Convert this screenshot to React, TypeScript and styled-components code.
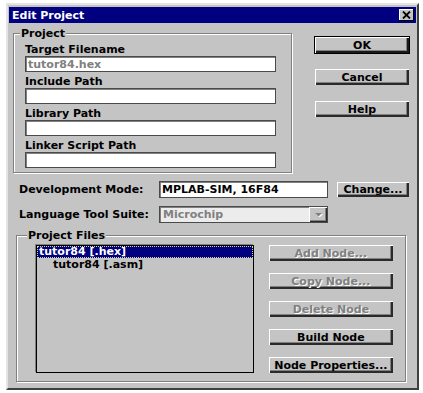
import styled, { createGlobalStyle } from 'styled-components';

const FACE = '#c4c4c4';
const SHADOW = '#808080';
const NAVY = '#000080';

const GlobalStyle = createGlobalStyle`
    html, body {
        margin: 0;
        padding: 0;
        background: #ffffff;
    }
    body {
        font-family: "DejaVu Sans", "Liberation Sans", sans-serif;
        font-size: 11px;
        font-weight: bold;
        line-height: 13px;
        color: #000;
    }
`;

const Window = styled.div`
    box-sizing: border-box;
    width: 413px;
    height: 387px;
    margin: 3px 0 0 6px;
    padding: 2px 1px 1px 1px;
    background: ${FACE};
    border: 2px solid;
    border-color: #e4e4e4 #404040 #404040 #e4e4e4;
`;

const TitleBar = styled.div`
    display: flex;
    align-items: center;
    justify-content: space-between;
    height: 16px;
    padding: 0 2px 0 3px;
    background: ${NAVY};
`;

const Title = styled.span`
    color: #fff;
`;

const CloseBox = styled.div`
    box-sizing: border-box;
    display: flex;
    align-items: center;
    justify-content: center;
    width: 15px;
    height: 12px;
    background: ${FACE};
    box-shadow: inset -1px -1px 0 #000, inset 1px 1px 0 #fff;
`;

const Body = styled.div`
    display: flex;
    flex-direction: column;
`;

const TopRow = styled.div`
    display: flex;
    margin: 4px 0 0 4px;
`;

const Group = styled.fieldset<{ $width: number }>`
    box-sizing: border-box;
    width: ${p => p.$width}px;
    margin: 0;
    padding: 0;
    min-inline-size: 0;
    border: 1px solid ${SHADOW};
    box-shadow: 1px 1px 0 #fff, inset 1px 1px 0 #fff;
`;

const Legend = styled.legend<{ $indent: number }>`
    margin-left: ${p => p.$indent}px;
    padding: 0 1px;
    line-height: 13px;
    background: ${FACE};
`;

const GroupInner = styled.div<{ $pad: string }>`
    padding: ${p => p.$pad};
`;

const Field = styled.div`
    display: flex;
    flex-direction: column;
    & + & {
        margin-top: 3px;
    }
`;

const Label = styled.div<{ $width?: number }>`
    width: ${p => (p.$width ? `${p.$width}px` : 'auto')};
    flex-shrink: 0;
    white-space: nowrap;
`;

const TextBox = styled.div<{ $width: number; $muted?: boolean; $bg?: string }>`
    box-sizing: border-box;
    display: flex;
    align-items: center;
    width: ${p => p.$width}px;
    height: 16px;
    padding-left: 2px;
    background: ${p => p.$bg || '#fff'};
    color: ${p => (p.$muted ? SHADOW : '#000')};
    border: 1px solid #4a4a4a;
    box-shadow: inset 1px 1px 0 ${SHADOW};
    white-space: nowrap;
`;

const ButtonColumn = styled.div<{ $gap: number; $left: number; $top: number; $width: number }>`
    display: flex;
    flex-direction: column;
    gap: ${p => p.$gap}px;
    width: ${p => p.$width}px;
    margin-left: ${p => p.$left}px;
    margin-top: ${p => p.$top}px;
`;

const Button = styled.div<{ $default?: boolean; $disabled?: boolean; $width?: number; $height?: number }>`
    box-sizing: border-box;
    display: flex;
    align-items: center;
    justify-content: center;
    width: ${p => (p.$width ? `${p.$width}px` : '100%')};
    height: ${p => p.$height || 18}px;
    flex-shrink: 0;
    background: ${FACE};
    color: ${p => (p.$disabled ? SHADOW : '#000')};
    text-shadow: ${p => (p.$disabled ? '1px 1px 0 #fff' : 'none')};
    border: 1px solid ${p => (p.$default ? '#000' : 'transparent')};
    box-shadow: ${p =>
        p.$default
            ? `inset 1px 1px 0 #fff, inset -2px -2px 0 #1a1a1a, inset -3px -3px 0 ${SHADOW}`
            : `inset 1px 1px 0 #fff, inset -2px -2px 0 #2a2a2a, inset -3px -3px 0 ${SHADOW}`};
    white-space: nowrap;
`;

const FormRow = styled.div<{ $top: number }>`
    display: flex;
    align-items: center;
    margin: ${p => p.$top}px 0 0 10px;
    height: 17px;
`;

const Combo = styled.div`
    box-sizing: border-box;
    display: flex;
    align-items: stretch;
    width: 169px;
    height: 17px;
    background: #ececec;
    border: 1px solid #4a4a4a;
    box-shadow: inset 1px 1px 0 ${SHADOW};
`;

const ComboText = styled.div`
    flex: 1;
    display: flex;
    align-items: center;
    padding-left: 3px;
    color: ${SHADOW};
`;

const DropButton = styled.div`
    box-sizing: border-box;
    display: flex;
    align-items: center;
    justify-content: center;
    width: 18px;
    background: ${FACE};
    box-shadow: inset 1px 1px 0 #fff, inset -1px -1px 0 #2a2a2a, inset -2px -2px 0 ${SHADOW};
`;

const FilesGroupWrap = styled.div`
    margin: 6px 0 0 7px;
`;

const FilesArea = styled.div`
    display: flex;
    align-items: flex-start;
`;

const ListBox = styled.div`
    box-sizing: border-box;
    width: 219px;
    height: 128px;
    background: ${FACE};
    border: 1px solid #000;
    box-shadow: -1px -1px 0 ${SHADOW};
    padding: 0;
`;

const ListItem = styled.div<{ $selected?: boolean; $indent: number }>`
    height: 12px;
    line-height: 12px;
    padding-left: ${p => p.$indent}px;
    margin-bottom: 1px;
    color: ${p => (p.$selected ? '#fff' : '#000')};
    background: ${p => (p.$selected ? NAVY : 'transparent')};
    outline: ${p => (p.$selected ? '1px dotted #d8d890' : 'none')};
    outline-offset: -1px;
    white-space: nowrap;
`;

const CloseIcon = () => (
    <svg width="9" height="8" viewBox="0 0 9 8">
        <path d="M1 0.5 L8 7.5 M8 0.5 L1 7.5" stroke="#000" strokeWidth="1.8" />
    </svg>
);

const DownArrow = () => (
    <svg width="9" height="5" viewBox="0 0 9 5">
        <path d="M2 2 L9 2 L5.5 5.5 Z" fill="#fff" />
        <path d="M1 1 L8 1 L4.5 4.5 Z" fill={SHADOW} />
    </svg>
);

const projectFields = [
    { label: 'Target Filename', value: 'tutor84.hex' },
    { label: 'Include Path', value: '' },
    { label: 'Library Path', value: '' },
    { label: 'Linker Script Path', value: '' },
];

const nodeButtons = [
    { label: 'Add Node...', disabled: true },
    { label: 'Copy Node...', disabled: true },
    { label: 'Delete Node', disabled: true },
    { label: 'Build Node', disabled: false },
    { label: 'Node Properties...', disabled: false },
];

const App = () => {
    return (
        <>
            <GlobalStyle />
            <Window>
                <TitleBar>
                    <Title>Edit Project</Title>
                    <CloseBox>
                        <CloseIcon />
                    </CloseBox>
                </TitleBar>
                <Body>
                    <TopRow>
                        <Group $width={279}>
                            <Legend $indent={6}>Project</Legend>
                            <GroupInner $pad="3px 16px 4px 11px">
                                {projectFields.map(f => (
                                    <Field key={f.label}>
                                        <Label>{f.label}</Label>
                                        <TextBox $width={251} $muted>
                                            {f.value}
                                        </TextBox>
                                    </Field>
                                ))}
                            </GroupInner>
                        </Group>
                        <ButtonColumn $gap={14} $left={22} $top={9} $width={96}>
                            <Button $default>OK</Button>
                            <Button>Cancel</Button>
                            <Button>Help</Button>
                        </ButtonColumn>
                    </TopRow>

                    <FormRow $top={8}>
                        <Label $width={140}>Development Mode:</Label>
                        <TextBox $width={169} style={{ height: 17 }}>
                            MPLAB-SIM, 16F84
                        </TextBox>
                        <Button $width={74} $height={17} style={{ marginLeft: 8 }}>
                            Change...
                        </Button>
                    </FormRow>

                    <FormRow $top={8}>
                        <Label $width={140}>Language Tool Suite:</Label>
                        <Combo>
                            <ComboText>Microchip</ComboText>
                            <DropButton>
                                <DownArrow />
                            </DropButton>
                        </Combo>
                    </FormRow>

                    <FilesGroupWrap>
                        <Group $width={390}>
                            <Legend $indent={10}>Project Files</Legend>
                            <GroupInner $pad="3px 11px 7px 19px">
                                <FilesArea>
                                    <ListBox>
                                        <ListItem $selected $indent={2}>
                                            tutor84 [.hex]
                                        </ListItem>
                                        <ListItem $indent={16}>tutor84 [.asm]</ListItem>
                                    </ListBox>
                                    <ButtonColumn $gap={10} $left={14} $top={-1} $width={127}>
                                        {nodeButtons.map(b => (
                                            <Button key={b.label} $disabled={b.disabled}>
                                                {b.label}
                                            </Button>
                                        ))}
                                    </ButtonColumn>
                                </FilesArea>
                            </GroupInner>
                        </Group>
                    </FilesGroupWrap>
                </Body>
            </Window>
        </>
    );
};

export default App;
